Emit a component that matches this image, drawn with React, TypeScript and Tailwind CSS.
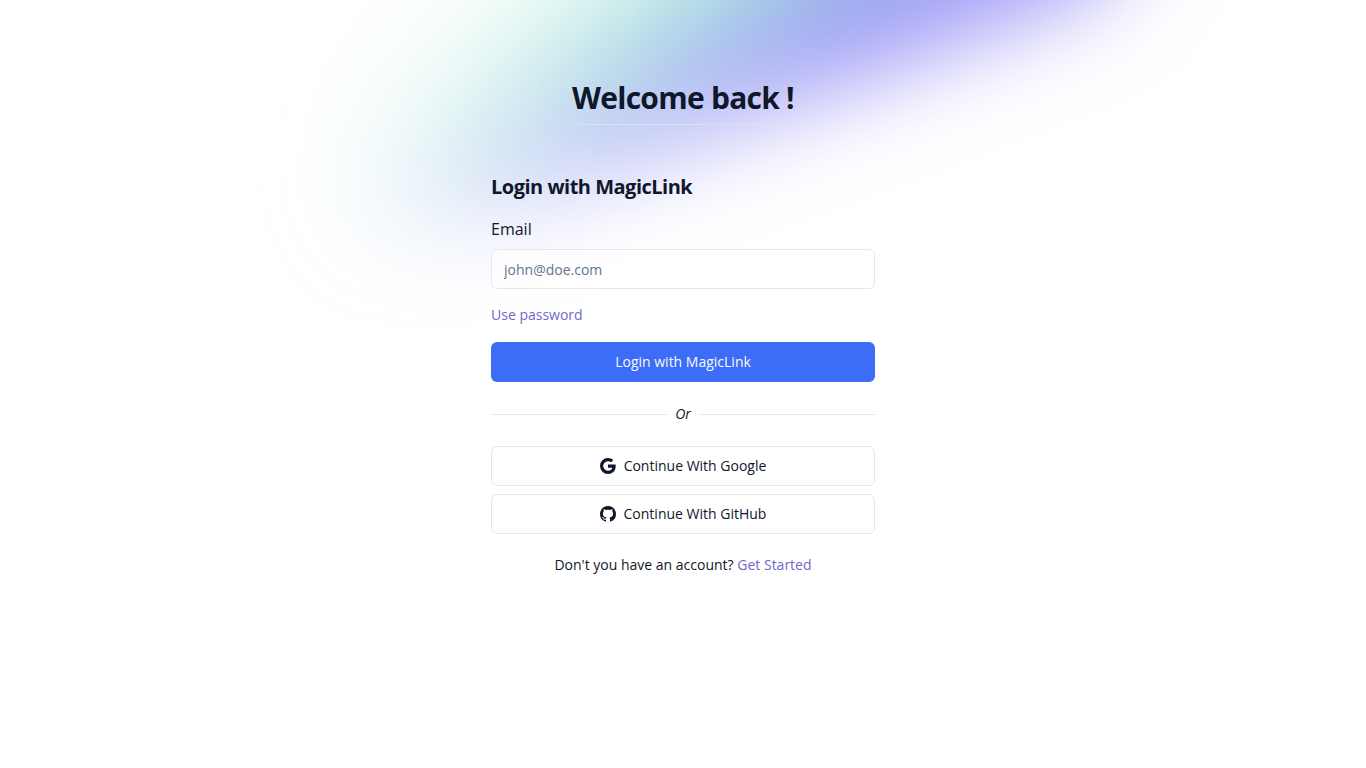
import { BsGithub, BsGoogle } from "react-icons/bs";

const providers = [
	{ name: "Google", Icon: BsGoogle },
	{ name: "GitHub", Icon: BsGithub },
];

const Glow = () => (
	<div className="pointer-events-none absolute inset-0 -z-10 overflow-hidden" aria-hidden="true">
		<svg className="absolute left-1/2 top-0 h-[400px] w-[1366px] -translate-x-1/2" viewBox="0 0 1366 400">
			<defs>
				<linearGradient id="glow" gradientUnits="userSpaceOnUse" x1="444" y1="0" x2="550" y2="186">
					<stop offset="0" stopColor="#c9f7e6" stopOpacity="0.1" />
					<stop offset="0.26" stopColor="#b3eedc" stopOpacity="0.7" />
					<stop offset="0.6" stopColor="#90d4d6" />
					<stop offset="0.94" stopColor="#989df3" />
					<stop offset="1.1" stopColor="#a29bf7" />
				</linearGradient>
				<linearGradient id="fade" gradientUnits="userSpaceOnUse" x1="350" y1="0" x2="850" y2="0">
					<stop offset="0" stopColor="#fff" stopOpacity="0.08" />
					<stop offset="0.5" stopColor="#fff" stopOpacity="0.64" />
					<stop offset="1" stopColor="#fff" />
				</linearGradient>
				<mask id="left" maskUnits="userSpaceOnUse" x="0" y="-400" width="1366" height="900">
					<rect x="0" y="-400" width="1366" height="900" fill="url(#fade)" />
				</mask>
				<filter id="soft" filterUnits="userSpaceOnUse" x="0" y="-400" width="1366" height="900">
					<feGaussianBlur stdDeviation="46" />
				</filter>
			</defs>
			<g filter="url(#soft)">
				<path
					d="M400 -150 L1180 -150 L1100 -10 L900 66 L740 126 L620 172 L490 222 L360 240 L330 150 Z"
					fill="url(#glow)"
					mask="url(#left)"
				/>
			</g>
		</svg>
	</div>
);

const App = () => {
	return (
		<div className="relative isolate min-h-screen bg-white font-['Open_Sans',sans-serif] text-sm text-slate-900">
			<Glow />
			<main className="mx-auto flex w-full max-w-96 flex-col pt-20">
				<h1 className="self-center border-b border-slate-200/60 pb-2 text-3xl font-bold tracking-tight">Welcome back !</h1>
				<form className="mt-12 flex flex-col" onSubmit={ (e) => e.preventDefault() }>
					<h2 className="text-xl font-bold tracking-tight">Login with MagicLink</h2>
					<label htmlFor="email" className="mt-4 text-base">Email</label>
					<input
						id="email"
						type="email"
						placeholder="john@doe.com"
						className="mt-2 h-10 rounded-md border border-slate-200 bg-white/60 px-3 placeholder:text-slate-500"
					/>
					<a href="#" className="mt-4 self-start text-[#6f69cc]">Use password</a>
					<button type="submit" className="mt-[17px] h-10 rounded-md bg-[#3d6df6] text-slate-50">Login with MagicLink</button>
				</form>
				<div className="my-6 flex items-center leading-4">
					<hr className="flex-1 border-slate-200" />
					<span className="px-2 italic">Or</span>
					<hr className="flex-1 border-slate-200" />
				</div>
				<div className="flex flex-col gap-2">
					{ providers.map(({ name, Icon }) => (
						<button key={ name } type="button" className="flex h-10 items-center justify-center gap-2 rounded-md border border-slate-200">
							<Icon className="size-4" aria-hidden="true" />
							Continue With { name }
						</button>
					)) }
				</div>
				<p className="mt-5 text-center leading-[22px]">
					Don't you have an account? <a href="#" className="text-[#6f69cc]">Get Started</a>
				</p>
			</main>
		</div>
	)
}

export default App;
